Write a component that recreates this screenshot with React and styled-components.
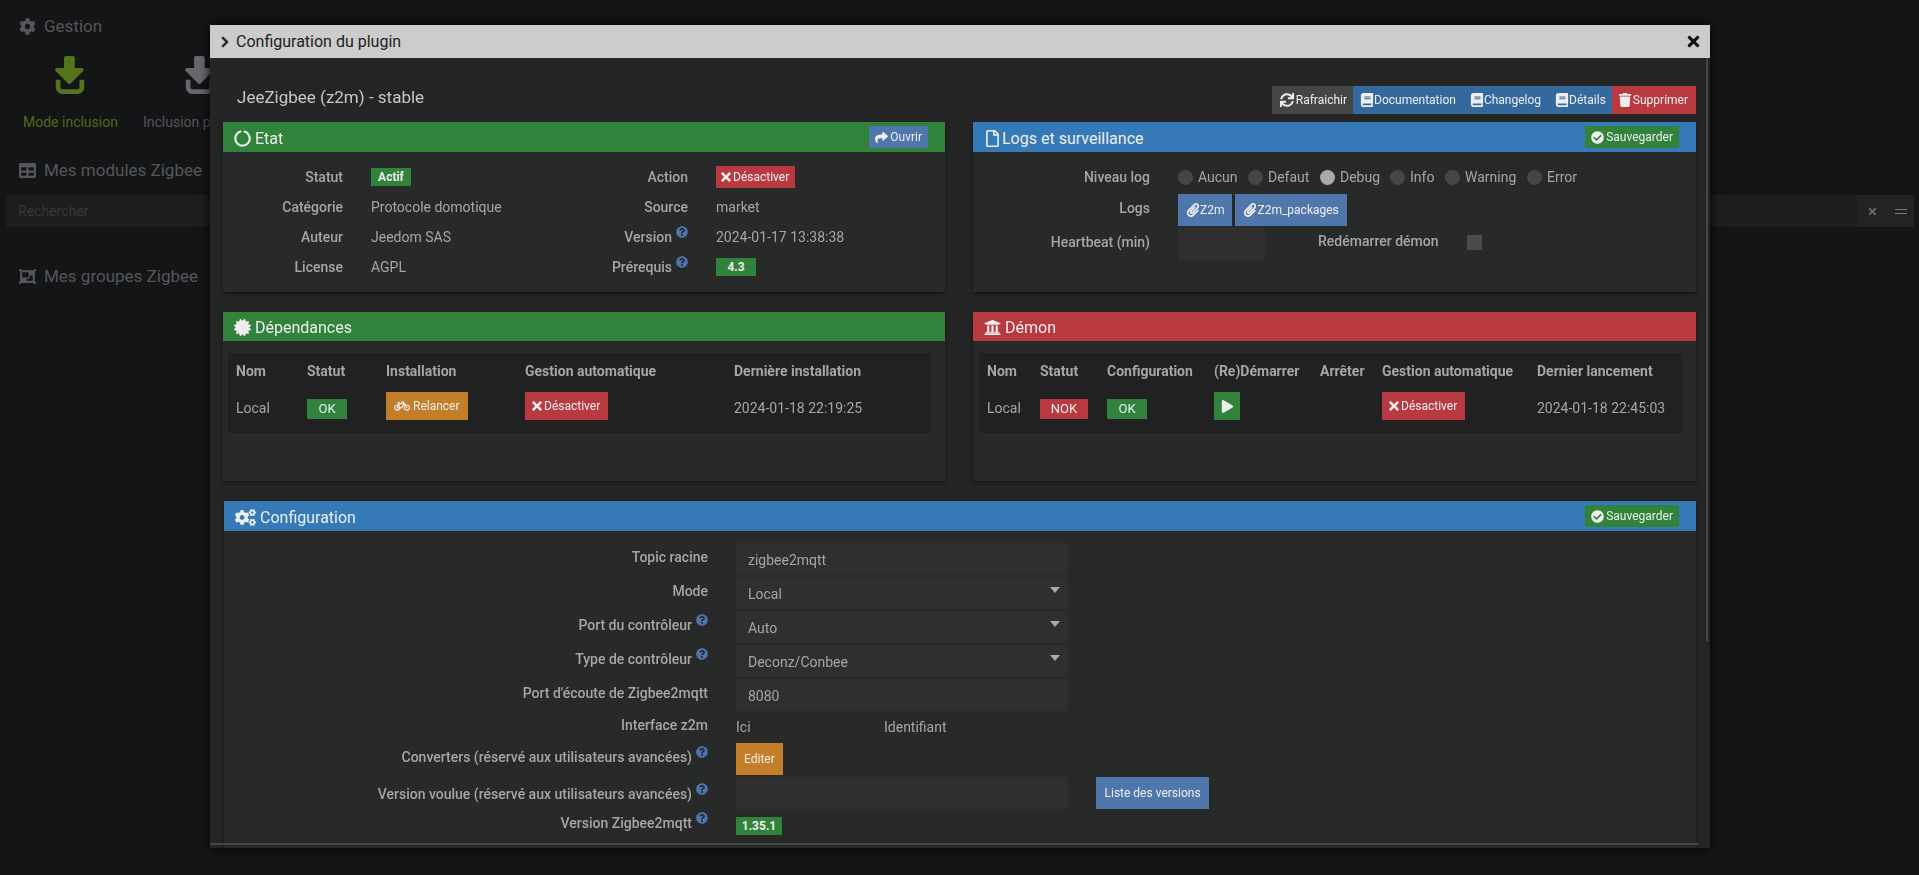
import styled, { createGlobalStyle } from 'styled-components'
import {
  FaBicycle,
  FaBook,
  FaCertificate,
  FaCheckCircle,
  FaChevronRight,
  FaCircleNotch,
  FaCog,
  FaCogs,
  FaObjectGroup,
  FaPaperclip,
  FaPlay,
  FaQuestionCircle,
  FaRegFile,
  FaShare,
  FaSignInAlt,
  FaSync,
  FaTable,
  FaTimes,
  FaTrash,
  FaUniversity,
} from 'react-icons/fa'

const colors = {
  green: '#31833c',
  red: '#b83a40',
  blue: '#3579b6',
  darkBlue: '#34699e',
  steel: '#4f77ab',
  orange: '#c27e28',
  grey: '#444546',
}

const GlobalStyle = createGlobalStyle`
  html, body {
    margin: 0;
    height: 100%;
    overflow: hidden;
    background: #141517;
    font-family: Roboto, "Liberation Sans", sans-serif;
    font-size: 14px;
    color: #a6a6a6;
  }
  * { box-sizing: border-box; }
`

/* page behind the modal */
const Page = styled.div`
  height: 875px;
  padding: 15px 5px 0 6px;
  overflow: hidden;
`
const Legend = styled.div`
  display: flex;
  align-items: center;
  gap: 8px;
  height: 22px;
  padding-left: 13px;
  font-size: 17px;
  color: #55575a;
  svg { width: 17px; height: 17px; }
`
const Tiles = styled.div`
  display: flex;
  gap: 25px;
  padding: 19px 0 0 17px;
  margin-bottom: 29px;
`
const Tile = styled.div`
  display: flex;
  flex-direction: column;
  align-items: center;
  gap: 20px;
  font-size: 14px;
  white-space: nowrap;
  color: ${(props) => props.$color};
  svg { width: 40px; height: 38px; transform: rotate(90deg); }
`
const SearchBar = styled.div`
  display: flex;
  height: 32px;
  margin: 14px 0 38px;
  background: #1c1d1f;
`
const SearchInput = styled.div`
  flex: 1;
  padding-left: 12px;
  line-height: 32px;
  color: #36383a;
`
const SearchTools = styled.div`
  display: flex;
  align-items: center;
  justify-content: space-between;
  width: 57px;
  padding: 0 7px 0 10px;
  background: #222325;
  color: #66686a;
  svg { width: 11px; height: 11px; }
`
const Lines = styled.span`
  width: 12px;
  height: 5px;
  border-top: 1px solid #77797b;
  border-bottom: 1px solid #77797b;
`

/* modal */
const Modal = styled.div`
  position: fixed;
  left: 210px;
  top: 25px;
  width: 1500px;
  height: 823px;
  display: flex;
  flex-direction: column;
  background: #252525;
  box-shadow: 0 0 10px #000;
`
const TitleBar = styled.div`
  flex: none;
  display: flex;
  align-items: center;
  height: 33px;
  padding: 0 8px 0 9px;
  background: #cccccc;
  color: #222;
  font-size: 16px;
`
const TitleText = styled.span`
  flex: 1;
  margin-left: 5px;
`
const Scroller = styled.div`
  flex: 1;
  overflow: hidden;
  padding: 28px 13px 0 13px;
`
const VScroll = styled.div`
  position: absolute;
  top: 33px;
  right: 2px;
  width: 2px;
  height: 583px;
  background: #454545;
`
const HScroll = styled.div`
  position: absolute;
  left: 0;
  bottom: 3px;
  width: 1489px;
  height: 2px;
  background: #454545;
`
const TopRow = styled.div`
  display: flex;
  align-items: center;
  justify-content: space-between;
  height: 28px;
  margin: 0 1px 8px 0;
`
const PluginName = styled.div`
  padding: 0 0 6px 14px;
  font-size: 17px;
  color: #c8c8c8;
`
const ButtonGroup = styled.div`
  display: flex;
  gap: ${(props) => props.$gap || 0}px;
`
const Button = styled.span`
  display: inline-flex;
  align-items: center;
  gap: ${(props) => props.$gap ?? 2}px;
  height: ${(props) => props.$h || 22}px;
  padding: 0 ${(props) => props.$pr ?? props.$px ?? 6}px 0 ${(props) => props.$pl ?? props.$px ?? 6}px;
  background: ${(props) => colors[props.$tone]};
  color: #eee;
  font-size: 12px;
  white-space: nowrap;
  svg {
    width: ${(props) => props.$icon || 14}px;
    height: ${(props) => props.$icon || 14}px;
    flex: none;
  }
`
const Columns = styled.div`
  display: grid;
  grid-template-columns: 722px 723px;
  column-gap: 28px;
  row-gap: 20px;
  margin-bottom: 20px;
`
const Panel = styled.section`
  background: #282a29;
  height: ${(props) => props.$height};
  box-shadow: 0 2px 4px rgba(0, 0, 0, 0.45);
`
const ConfigPanel = styled(Panel)`
  margin: 0 1px;
`
const PanelHead = styled.header`
  display: flex;
  align-items: center;
  justify-content: space-between;
  height: ${(props) => props.$h || 30}px;
  padding: 0 17px 0 11px;
  background: ${(props) => colors[props.$tone]};
  color: #eee;
  font-size: 16px;
`
const PanelTitle = styled.div`
  display: flex;
  align-items: center;
  gap: ${(props) => props.$gap ?? 4}px;
  padding-top: 2px;
  svg { width: ${(props) => props.$icon || 17}px; height: ${(props) => props.$icon || 17}px; }
`

const InfoGrid = styled.div`
  display: grid;
  grid-template-columns: 120px 225px 120px 1fr;
  grid-auto-rows: 30px;
  padding-top: 10px;
  align-items: center;
`
const Label = styled.div`
  display: flex;
  align-items: center;
  justify-content: flex-end;
  gap: 4px;
  font-weight: 500;
  white-space: nowrap;
  color: #a6a6a6;
`
const Help = styled(FaQuestionCircle)`
  width: 12px;
  height: 12px;
  margin-bottom: 10px;
  color: #4d76b0;
`
const Value = styled.div`
  display: flex;
  align-items: center;
  padding-left: 28px;
`
const Badge = styled.span`
  display: inline-flex;
  align-items: center;
  justify-content: center;
  width: ${(props) => props.$w}px;
  height: ${(props) => props.$h || 18}px;
  background: ${(props) => colors[props.$tone || 'green']};
  color: #eee;
  font-size: ${(props) => props.$size || 12}px;
  font-weight: ${(props) => props.$weight || 700};
`

const LogGrid = styled.div`
  display: grid;
  grid-template-columns: 177px 1fr;
  grid-template-rows: 33px 34px 32px;
  padding-top: 9px;
  align-items: start;
`
const LogLabel = styled(Label)`
  height: ${(props) => (props.$first ? '33px' : '32px')};
  padding-bottom: ${(props) => (props.$first ? 1 : 5)}px;
`
const LogValue = styled.div`
  display: flex;
  align-items: center;
  padding-left: 28px;
  height: ${(props) => (props.$first ? '33px' : '32px')};
`
const Radio = styled.span`
  width: 15px;
  height: 15px;
  margin-right: 5px;
  border-radius: 50%;
  background: ${(props) => (props.$on ? '#aaaaaa' : '#454648')};
`
const RadioText = styled.span`
  width: ${(props) => props.$w}px;
  padding-bottom: 2px;
`
const HeartInput = styled.div`
  width: 87px;
  height: 32px;
  background: #2f2f2f;
`
const RestartLabel = styled.span`
  margin-left: 53px;
  padding-bottom: 6px;
  font-weight: 500;
`
const Checkbox = styled.span`
  width: 15px;
  height: 15px;
  margin: 0 0 3px 29px;
  background: #4a4b4c;
`

const Table = styled.table`
  table-layout: fixed;
  width: ${(props) => props.$w}px;
  margin: 12px 0 0 ${(props) => props.$ml}px;
  border-collapse: collapse;
  background: #212121;
`
const Th = styled.th`
  height: 35px;
  padding: 0 8px;
  text-align: left;
  font-weight: 700;
  color: #a6a6a6;
  white-space: nowrap;
`
const Td = styled.td`
  height: 45px;
  padding: ${(props) => (props.$button ? '4px 0 0 8px' : '10px 0 0 8px')};
  vertical-align: top;
  line-height: 20px;
  white-space: nowrap;
`

const FormGrid = styled.div`
  display: grid;
  grid-template-columns: 484px 1fr;
  padding-top: 12px;
`
const FormLabel = styled(Label)`
  height: ${(props) => props.$h || 34}px;
  padding-bottom: 6px;
`
const Field = styled.div`
  height: ${(props) => props.$h || 34}px;
  padding-left: 28px;
`
const TextInput = styled.input`
  display: block;
  flex: none;
  width: 332px;
  height: 32px;
  padding: 2px 12px 0;
  border: none;
  outline: none;
  background: #2f2f2f;
  color: #a6a6a6;
  font: inherit;
`
const SelectWrap = styled.div`
  position: relative;
  width: 332px;
  &::after {
    content: '';
    position: absolute;
    right: 8px;
    top: 10px;
    border-left: 5.5px solid transparent;
    border-right: 5.5px solid transparent;
    border-top: 6px solid #aaa;
  }
`
const Select = styled.select`
  display: block;
  width: 100%;
  height: 32px;
  padding: 2px 12px 0;
  border: none;
  outline: none;
  appearance: none;
  background: #2f2f2f;
  color: #a6a6a6;
  font: inherit;
`
const Links = styled.div`
  display: flex;
  align-items: center;
  height: 28px;
`
const LinkText = styled.span`
  width: ${(props) => props.$w}px;
`
const VersionRow = styled.div`
  display: flex;
  gap: 28px;
`

const FormField = ({ label, help, h, children }) => (
  <>
    <FormLabel $h={h}>
      {label}
      {help && <Help />}
    </FormLabel>
    <Field $h={h}>{children}</Field>
  </>
)

const Dropdown = ({ value }) => (
  <SelectWrap>
    <Select defaultValue={value}>
      <option>{value}</option>
    </Select>
  </SelectWrap>
)

const Save = () => (
  <Button $tone='green' $icon={13}>
    <FaCheckCircle />
    Sauvegarder
  </Button>
)

const Disable = ({ ...rest }) => (
  <Button $tone='red' $gap={0} {...rest}>
    <FaTimes />
    Désactiver
  </Button>
)

const App = () => (
  <>
    <GlobalStyle />
    <Page>
      <Legend>
        <FaCog />
        Gestion
      </Legend>
      <Tiles>
        <Tile $color='#4e6a1e'>
          <FaSignInAlt color='#55741e' />
          Mode inclusion
        </Tile>
        <Tile $color='#55575a'>
          <FaSignInAlt color='#66686b' />
          Inclusion par code
        </Tile>
      </Tiles>
      <Legend>
        <FaTable />
        Mes modules Zigbee
      </Legend>
      <SearchBar>
        <SearchInput>Rechercher</SearchInput>
        <SearchTools>
          <FaTimes />
          <Lines />
        </SearchTools>
      </SearchBar>
      <Legend>
        <FaObjectGroup />
        Mes groupes Zigbee
      </Legend>
    </Page>

    <Modal>
      <TitleBar>
        <FaChevronRight size={12} stroke='currentColor' strokeWidth={30} />
        <TitleText>Configuration du plugin</TitleText>
        <FaTimes size={17} color='#111' />
      </TitleBar>
      <Scroller>
        <TopRow>
          <PluginName>JeeZigbee (z2m) - stable</PluginName>
          <ButtonGroup>
            <Button $tone='grey' $h={28} $pl={8} $pr={6}>
              <FaSync />
              Rafraichir
            </Button>
            <Button $tone='darkBlue' $h={28} $px={7} $gap={0}>
              <FaBook />
              Documentation
            </Button>
            <Button $tone='darkBlue' $h={28} $px={7} $gap={0}>
              <FaBook />
              Changelog
            </Button>
            <Button $tone='darkBlue' $h={28} $pl={7} $pr={6} $gap={0}>
              <FaBook />
              Détails
            </Button>
            <Button $tone='red' $h={28} $pl={6} $pr={8} $gap={1}>
              <FaTrash />
              Supprimer
            </Button>
          </ButtonGroup>
        </TopRow>

        <Columns>
          <Panel $height='170px'>
            <PanelHead $tone='green'>
              <PanelTitle>
                <FaCircleNotch />
                Etat
              </PanelTitle>
              <Button $tone='steel' $icon={13}>
                <FaShare />
                Ouvrir
              </Button>
            </PanelHead>
            <InfoGrid>
              <Label>Statut</Label>
              <Value>
                <Badge $w={40}>Actif</Badge>
              </Value>
              <Label>Action</Label>
              <Value>
                <Disable $pl={3} $pr={6} />
              </Value>
              <Label>Catégorie</Label>
              <Value>Protocole domotique</Value>
              <Label>Source</Label>
              <Value>market</Value>
              <Label>Auteur</Label>
              <Value>Jeedom SAS</Value>
              <Label>
                Version
                <Help />
              </Label>
              <Value>2024-01-17 13:38:38</Value>
              <Label>License</Label>
              <Value>AGPL</Value>
              <Label>
                Prérequis
                <Help />
              </Label>
              <Value>
                <Badge $w={40}>4.3</Badge>
              </Value>
            </InfoGrid>
          </Panel>

          <Panel $height='170px'>
            <PanelHead $tone='blue'>
              <PanelTitle $gap={1}>
                <FaRegFile />
                Logs et surveillance
              </PanelTitle>
              <Save />
            </PanelHead>
            <LogGrid>
              <LogLabel $first>Niveau log</LogLabel>
              <LogValue $first>
                <Radio />
                <RadioText $w={50}>Aucun</RadioText>
                <Radio />
                <RadioText $w={52}>Defaut</RadioText>
                <Radio $on />
                <RadioText $w={50}>Debug</RadioText>
                <Radio />
                <RadioText $w={35}>Info</RadioText>
                <Radio />
                <RadioText $w={62}>Warning</RadioText>
                <Radio />
                <RadioText $w={40}>Error</RadioText>
              </LogValue>
              <LogLabel>Logs</LogLabel>
              <LogValue>
                <ButtonGroup $gap={3}>
                  <Button $tone='steel' $h={32} $px={8} $gap={0}>
                    <FaPaperclip />
                    Z2m
                  </Button>
                  <Button $tone='steel' $h={32} $px={8} $gap={0}>
                    <FaPaperclip />
                    Z2m_packages
                  </Button>
                </ButtonGroup>
              </LogValue>
              <LogLabel>Heartbeat (min)</LogLabel>
              <LogValue>
                <HeartInput />
                <RestartLabel>Redémarrer démon</RestartLabel>
                <Checkbox />
              </LogValue>
            </LogGrid>
          </Panel>

          <Panel $height='169px'>
            <PanelHead $tone='green' $h={29}>
              <PanelTitle>
                <FaCertificate />
                Dépendances
              </PanelTitle>
            </PanelHead>
            <Table $w={703} $ml={5}>
              <colgroup>
                <col width='71' />
                <col width='79' />
                <col width='139' />
                <col width='209' />
                <col width='205' />
              </colgroup>
              <thead>
                <tr>
                  <Th>Nom</Th>
                  <Th>Statut</Th>
                  <Th>Installation</Th>
                  <Th>Gestion automatique</Th>
                  <Th>Dernière installation</Th>
                </tr>
              </thead>
              <tbody>
                <tr>
                  <Td>Local</Td>
                  <Td>
                    <Badge $w={40} $h={20} $size={13} $weight={400}>
                      OK
                    </Badge>
                  </Td>
                  <Td $button>
                    <Button $tone='orange' $h={28} $px={8} $gap={3} $icon={16}>
                      <FaBicycle />
                      Relancer
                    </Button>
                  </Td>
                  <Td $button>
                    <Disable $h={28} $pl={5} $pr={8} />
                  </Td>
                  <Td>2024-01-18 22:19:25</Td>
                </tr>
              </tbody>
            </Table>
          </Panel>

          <Panel $height='169px'>
            <PanelHead $tone='red' $h={29}>
              <PanelTitle>
                <FaUniversity />
                Démon
              </PanelTitle>
            </PanelHead>
            <Table $w={703} $ml={6}>
              <colgroup>
                <col width='53' />
                <col width='67' />
                <col width='107' />
                <col width='106' />
                <col width='62' />
                <col width='155' />
                <col width='153' />
              </colgroup>
              <thead>
                <tr>
                  <Th>Nom</Th>
                  <Th>Statut</Th>
                  <Th>Configuration</Th>
                  <Th>(Re)Démarrer</Th>
                  <Th>Arrêter</Th>
                  <Th>Gestion automatique</Th>
                  <Th>Dernier lancement</Th>
                </tr>
              </thead>
              <tbody>
                <tr>
                  <Td>Local</Td>
                  <Td>
                    <Badge $tone='red' $w={48} $h={20} $size={13} $weight={400}>
                      NOK
                    </Badge>
                  </Td>
                  <Td>
                    <Badge $w={40} $h={20} $size={13} $weight={400}>
                      OK
                    </Badge>
                  </Td>
                  <Td $button>
                    <Button $tone='green' $h={28} $px={6.5} $icon={13}>
                      <FaPlay />
                    </Button>
                  </Td>
                  <Td />
                  <Td $button>
                    <Disable $h={28} $pl={5} $pr={8} />
                  </Td>
                  <Td>2024-01-18 22:45:03</Td>
                </tr>
              </tbody>
            </Table>
          </Panel>
        </Columns>

        <ConfigPanel $height='400px'>
          <PanelHead $tone='blue'>
            <PanelTitle $icon={21}>
              <FaCogs />
              Configuration
            </PanelTitle>
            <Save />
          </PanelHead>
          <FormGrid>
            <FormField label='Topic racine'>
              <TextInput defaultValue='zigbee2mqtt' />
            </FormField>
            <FormField label='Mode'>
              <Dropdown value='Local' />
            </FormField>
            <FormField label='Port du contrôleur' help>
              <Dropdown value='Auto' />
            </FormField>
            <FormField label='Type de contrôleur' help>
              <Dropdown value='Deconz/Conbee' />
            </FormField>
            <FormField label="Port d'écoute de Zigbee2mqtt">
              <TextInput defaultValue='8080' />
            </FormField>
            <FormField label='Interface z2m' h={30}>
              <Links>
                <LinkText $w={148}>Ici</LinkText>
                <LinkText>Identifiant</LinkText>
              </Links>
            </FormField>
            <FormField label='Converters (réservé aux utilisateurs avancées)' help>
              <Button $tone='orange' $h={32} $px={8}>
                Editer
              </Button>
            </FormField>
            <FormField label='Version voulue (réservé aux utilisateurs avancées)' help h={40}>
              <VersionRow>
                <TextInput />
                <Button $tone='steel' $h={32} $px={8.5}>
                  Liste des versions
                </Button>
              </VersionRow>
            </FormField>
            <FormField label='Version Zigbee2mqtt' help h={18}>
              <Badge $w={46}>1.35.1</Badge>
            </FormField>
          </FormGrid>
        </ConfigPanel>
      </Scroller>
      <VScroll />
      <HScroll />
    </Modal>
  </>
)

export default App
